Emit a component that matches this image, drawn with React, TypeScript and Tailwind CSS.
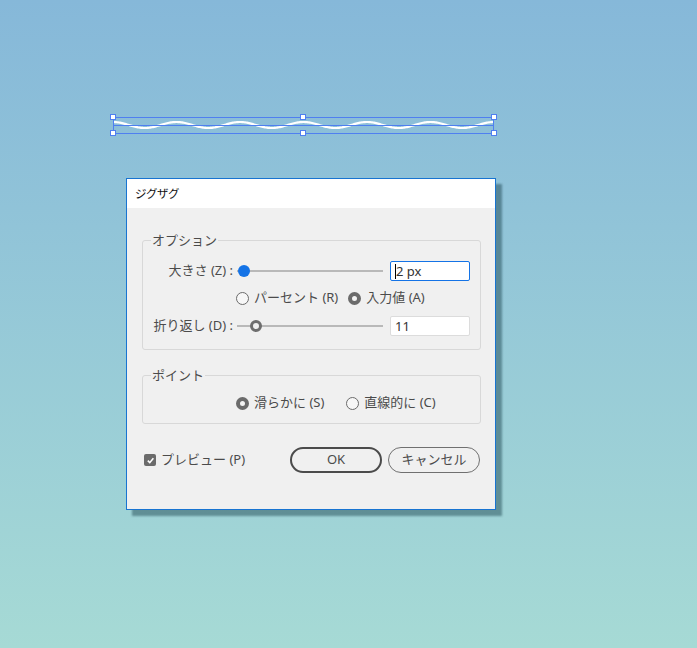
import React from "react";

const FONT = "font-['Noto_Sans','Noto_Sans_CJK_JP',sans-serif]";

// sine-ish wave through the selected path (6 full periods, 113 → 494)
function wavePath() {
  const x0 = 113;
  const x1 = 494;
  const period = (x1 - x0) / 6;
  let d = "";
  for (let x = x0; x <= x1; x += 1) {
    const y = 125 - 3 * Math.cos(((x - x0) / period) * Math.PI * 2);
    d += `${x === x0 ? "M" : "L"}${x} ${y.toFixed(2)} `;
  }
  return d;
}

function Selection() {
  const handles = [
    [113, 117],
    [303, 117],
    [494, 117],
    [113, 133],
    [303, 133],
    [494, 133],
  ];
  return (
    <svg
      className="absolute left-0 top-0"
      width={697}
      height={150}
      viewBox="0 0 697 150"
    >
      <path d={wavePath()} fill="none" stroke="#ffffff" strokeWidth={2.2} />
      <line x1={113} y1={125.5} x2={494} y2={125.5} stroke="#4f7ff0" strokeWidth={1} />
      <rect x={113.5} y={117.5} width={380} height={16} fill="none" stroke="#4f7ff0" strokeWidth={1} />
      {handles.map(([x, y]) => (
        <rect
          key={`${x}-${y}`}
          x={x - 2.5}
          y={y - 2.5}
          width={5}
          height={5}
          fill="#ffffff"
          stroke="#4f7ff0"
          strokeWidth={1}
        />
      ))}
    </svg>
  );
}

function Radio({ checked, label }: { checked?: boolean; label: string }) {
  return (
    <label className="flex items-center gap-[5px]">
      <span
        className={
          checked
            ? "h-[13px] w-[13px] rounded-full border-[4px] border-[#6b6b6b] bg-[#f4f4f4]"
            : "h-[13px] w-[13px] rounded-full border-[1.5px] border-[#6b6b6b] bg-[#f7f7f7]"
        }
      />
      <span>{label}</span>
    </label>
  );
}

function Slider({ hollow }: { hollow?: boolean }) {
  return (
    <div className="relative h-5 w-[146px]">
      <div className="absolute left-0 right-0 top-[9px] h-[2px] bg-[#b9b9b9]" />
      {hollow ? (
        <div className="absolute left-[13px] top-[4px] h-[12px] w-[12px] rounded-full border-[3px] border-[#6e6e6e] bg-[#f0f0f0]" />
      ) : (
        <div className="absolute left-[1px] top-[4px] h-[12px] w-[12px] rounded-full bg-[#1473e6]" />
      )}
    </div>
  );
}

function NumberField({ value, focused }: { value: string; focused?: boolean }) {
  return (
    <div
      className={`flex h-5 w-[80px] items-center rounded-[2px] bg-white pl-[4px] ${
        focused ? "border-[1.5px] border-[#1473e6]" : "border border-[#dcdcdc]"
      }`}
    >
      {focused && <span className="h-[15px] w-px bg-black" />}
      <span className="leading-none text-[#333]">{value}</span>
    </div>
  );
}

function Group({ title, children }: { title: string; children: React.ReactNode }) {
  return (
    <fieldset className="rounded-[3px] border border-[#d8d8d8] pl-[8px] pr-[9px]">
      <legend className="px-[1px] leading-[17px] text-[#4b4b4b]">{title}</legend>
      {children}
    </fieldset>
  );
}

export default function App() {
  return (
    <div
      className={`relative h-[648px] w-[697px] overflow-hidden bg-gradient-to-b from-[#86b8d9] to-[#a6dad5] pl-[126px] pt-[178px] text-[13px] text-[#4b4b4b] ${FONT}`}
    >
      <Selection />

      <div className="flex h-[332px] w-[370px] flex-col border border-[#1874d1] bg-[#f0f0f0] shadow-[6px_6px_2px_rgba(20,60,70,0.45)]">
        <div className="flex h-[29px] items-center bg-white pl-[8px] text-[11.5px] tracking-[-0.5px] text-[#111]">
          ジグザグ
        </div>

        <div className="flex flex-col pl-[15px] pr-[14px] pt-[24px]">
          <Group title="オプション">
            <div className="flex flex-col pb-[13px] pt-[12px]">
              <div className="flex h-5 items-center">
                <span className="w-[82px] text-right">大きさ (Z) :</span>
                <span className="ml-[4px]">
                  <Slider />
                </span>
                <span className="ml-[7px]">
                  <NumberField value="2 px" focused />
                </span>
              </div>
              <div className="mt-[7px] flex h-5 items-center gap-[10px] pl-[85px]">
                <Radio label="パーセント (R)" />
                <Radio checked label="入力値 (A)" />
              </div>
              <div className="mt-[8px] flex h-5 items-center">
                <span className="w-[82px] text-right">折り返し (D) :</span>
                <span className="ml-[4px]">
                  <Slider hollow />
                </span>
                <span className="ml-[7px]">
                  <NumberField value="11" />
                </span>
              </div>
            </div>
          </Group>

          <div className="mt-[17px]">
            <Group title="ポイント">
              <div className="flex h-5 items-center gap-[22px] pl-[85px] mt-[9px] mb-[10px]">
                <Radio checked label="滑らかに (S)" />
                <Radio label="直線的に (C)" />
              </div>
            </Group>
          </div>
        </div>

        <div className="mt-[23px] flex items-center pl-[17px] pr-[15px]">
          <span className="flex h-[12px] w-[12px] items-center justify-center rounded-[2px] bg-[#6b6b6b]">
            <svg width="9" height="9" viewBox="0 0 10 10">
              <path d="M2 5.2 L4.2 7.4 L8.2 2.6" fill="none" stroke="#fff" strokeWidth="1.8" />
            </svg>
          </span>
          <span className="ml-[5px]">プレビュー (P)</span>
          <div className="ml-auto flex gap-[6px]">
            <button className="h-[26px] w-[92px] rounded-full border-2 border-[#4b4b4b] text-[#4b4b4b]">
              OK
            </button>
            <button className="h-[26px] w-[92px] rounded-full border border-[#707070] text-[#4b4b4b]">
              キャンセル
            </button>
          </div>
        </div>
      </div>
    </div>
  );
}
